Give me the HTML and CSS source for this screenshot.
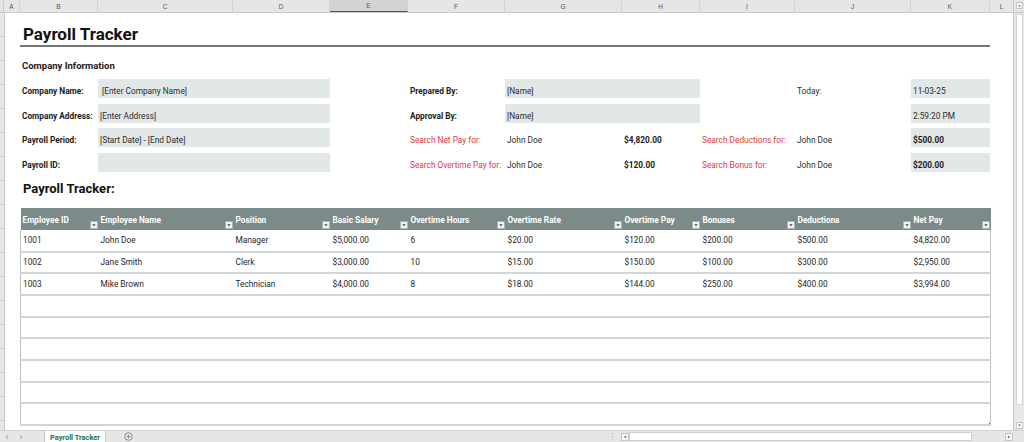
FILE: index.html
```html
<!DOCTYPE html>
<html lang="en">
<head>
<meta charset="utf-8">
<title>Payroll Tracker</title>
<link rel="stylesheet" href="styles.css">
</head>
<body>
<div class="app">
  <div class="colhead">
    <div class="corner"></div>
    <div class="ch c-a">A</div>
    <div class="ch c-b">B</div>
    <div class="ch c-c">C</div>
    <div class="ch c-d">D</div>
    <div class="ch c-e sel">E</div>
    <div class="ch c-f">F</div>
    <div class="ch c-g">G</div>
    <div class="ch c-h">H</div>
    <div class="ch c-i">I</div>
    <div class="ch c-j">J</div>
    <div class="ch c-k">K</div>
    <div class="ch c-l">L</div>
    <div class="vs-top">
      <svg class="arrowbox" viewBox="0 0 7 7" width="7" height="7"><rect x="0.5" y="0.5" width="6" height="6" fill="#fff" stroke="#c6c6c6"/><path d="M2 4.5h3L3.5 2.5z" fill="#777"/></svg>
    </div>
  </div>

  <div class="main">
    <div class="rowhead"></div>
    <div class="sheet">
      <h1 class="title">Payroll Tracker</h1>
      <div class="rule"></div>
      <div class="section-label">Company Information</div>

      <div class="info">
        <div class="cell lbl">Company Name:</div>
        <div class="cell box span2">&nbsp;[Enter Company Name]</div>
        <div class="cell"></div>
        <div class="cell lbl">Prepared By:</div>
        <div class="cell box span2">[Name]</div>
        <div class="cell"></div>
        <div class="cell">Today:</div>
        <div class="cell box">11-03-25</div>

        <div class="cell lbl">Company Address:</div>
        <div class="cell box span2">[Enter Address]</div>
        <div class="cell"></div>
        <div class="cell lbl">Approval By:</div>
        <div class="cell box span2">[Name]</div>
        <div class="cell"></div>
        <div class="cell"></div>
        <div class="cell box">2:59:20 PM</div>

        <div class="cell lbl">Payroll Period:</div>
        <div class="cell box span2">[Start Date] - [End Date]</div>
        <div class="cell"></div>
        <div class="cell red">Search Net Pay for:</div>
        <div class="cell">John Doe</div>
        <div class="cell strong">$4,820.00</div>
        <div class="cell red">Search Deductions for:</div>
        <div class="cell">John Doe</div>
        <div class="cell box strong">$500.00</div>

        <div class="cell lbl">Payroll ID:</div>
        <div class="cell box span2"></div>
        <div class="cell"></div>
        <div class="cell red">Search Overtime Pay for:</div>
        <div class="cell">John Doe</div>
        <div class="cell strong">$120.00</div>
        <div class="cell red">Search Bonus for:</div>
        <div class="cell">John Doe</div>
        <div class="cell box strong">$200.00</div>
      </div>

      <h2 class="subtitle">Payroll Tracker:</h2>

      <table class="tracker">
        <colgroup>
          <col class="w-b"><col class="w-c"><col class="w-d"><col class="w-e"><col class="w-f">
          <col class="w-g"><col class="w-h"><col class="w-i"><col class="w-j"><col class="w-k">
        </colgroup>
        <thead>
          <tr>
            <th><div class="th-in"><span>Employee ID</span><svg class="dd" viewBox="0 0 8 8"><rect x="0.5" y="0.5" width="7" height="7" fill="#f2f2f2" stroke="#a9b3b3"/><path d="M2.3 3.3h3.4L4 5.3z" fill="#444"/></svg></div></th>
            <th><div class="th-in"><span>Employee Name</span><svg class="dd" viewBox="0 0 8 8"><rect x="0.5" y="0.5" width="7" height="7" fill="#f2f2f2" stroke="#a9b3b3"/><path d="M2.3 3.3h3.4L4 5.3z" fill="#444"/></svg></div></th>
            <th><div class="th-in"><span>Position</span><svg class="dd" viewBox="0 0 8 8"><rect x="0.5" y="0.5" width="7" height="7" fill="#f2f2f2" stroke="#a9b3b3"/><path d="M2.3 3.3h3.4L4 5.3z" fill="#444"/></svg></div></th>
            <th><div class="th-in"><span>Basic Salary</span><svg class="dd" viewBox="0 0 8 8"><rect x="0.5" y="0.5" width="7" height="7" fill="#f2f2f2" stroke="#a9b3b3"/><path d="M2.3 3.3h3.4L4 5.3z" fill="#444"/></svg></div></th>
            <th><div class="th-in"><span>Overtime Hours</span><svg class="dd" viewBox="0 0 8 8"><rect x="0.5" y="0.5" width="7" height="7" fill="#f2f2f2" stroke="#a9b3b3"/><path d="M2.3 3.3h3.4L4 5.3z" fill="#444"/></svg></div></th>
            <th><div class="th-in"><span>Overtime Rate</span><svg class="dd" viewBox="0 0 8 8"><rect x="0.5" y="0.5" width="7" height="7" fill="#f2f2f2" stroke="#a9b3b3"/><path d="M2.3 3.3h3.4L4 5.3z" fill="#444"/></svg></div></th>
            <th><div class="th-in"><span>Overtime Pay</span><svg class="dd" viewBox="0 0 8 8"><rect x="0.5" y="0.5" width="7" height="7" fill="#f2f2f2" stroke="#a9b3b3"/><path d="M2.3 3.3h3.4L4 5.3z" fill="#444"/></svg></div></th>
            <th><div class="th-in"><span>Bonuses</span><svg class="dd" viewBox="0 0 8 8"><rect x="0.5" y="0.5" width="7" height="7" fill="#f2f2f2" stroke="#a9b3b3"/><path d="M2.3 3.3h3.4L4 5.3z" fill="#444"/></svg></div></th>
            <th><div class="th-in"><span>Deductions</span><svg class="dd" viewBox="0 0 8 8"><rect x="0.5" y="0.5" width="7" height="7" fill="#f2f2f2" stroke="#a9b3b3"/><path d="M2.3 3.3h3.4L4 5.3z" fill="#444"/></svg></div></th>
            <th><div class="th-in"><span>Net Pay</span><svg class="dd" viewBox="0 0 8 8"><rect x="0.5" y="0.5" width="7" height="7" fill="#f2f2f2" stroke="#a9b3b3"/><path d="M2.3 3.3h3.4L4 5.3z" fill="#444"/></svg></div></th>
          </tr>
        </thead>
        <tbody>
          <tr><td>1001</td><td>John Doe</td><td>Manager</td><td>$5,000.00</td><td>6</td><td>$20.00</td><td>$120.00</td><td>$200.00</td><td>$500.00</td><td>$4,820.00</td></tr>
          <tr><td>1002</td><td>Jane Smith</td><td>Clerk</td><td>$3,000.00</td><td>10</td><td>$15.00</td><td>$150.00</td><td>$100.00</td><td>$300.00</td><td>$2,950.00</td></tr>
          <tr><td>1003</td><td>Mike Brown</td><td>Technician</td><td>$4,000.00</td><td>8</td><td>$18.00</td><td>$144.00</td><td>$250.00</td><td>$400.00</td><td>$3,994.00</td></tr>
          <tr><td></td><td></td><td></td><td></td><td></td><td></td><td></td><td></td><td></td><td></td></tr>
          <tr><td></td><td></td><td></td><td></td><td></td><td></td><td></td><td></td><td></td><td></td></tr>
          <tr><td></td><td></td><td></td><td></td><td></td><td></td><td></td><td></td><td></td><td></td></tr>
          <tr><td></td><td></td><td></td><td></td><td></td><td></td><td></td><td></td><td></td><td></td></tr>
          <tr><td></td><td></td><td></td><td></td><td></td><td></td><td></td><td></td><td></td><td></td></tr>
          <tr class="last"><td></td><td></td><td></td><td></td><td></td><td></td><td></td><td></td><td></td><td class="resize"></td></tr>
        </tbody>
      </table>
    </div>
    <div class="vscroll">
      <div class="thumb"></div>
      <svg class="arrowbox" viewBox="0 0 7 7" width="7" height="7"><rect x="0.5" y="0.5" width="6" height="6" fill="#fff" stroke="#c6c6c6"/><path d="M2 2.5h3L3.5 4.5z" fill="#777"/></svg>
    </div>
  </div>

  <div class="tabbar">
    <div class="nav">
      <svg width="5" height="6" viewBox="0 0 5 6"><path d="M4 0.5v5L1 3z" fill="#c2c2c2"/></svg>
      <svg width="5" height="6" viewBox="0 0 5 6"><path d="M1 0.5v5L4 3z" fill="#c2c2c2"/></svg>
    </div>
    <div class="tab">Payroll Tracker</div>
    <div class="add">
      <svg width="9" height="9" viewBox="0 0 9 9"><circle cx="4.5" cy="4.5" r="3.8" fill="none" stroke="#777" stroke-width="0.8"/><path d="M4.5 2.6v3.8M2.6 4.5h3.8" stroke="#777" stroke-width="0.8"/></svg>
    </div>
    <div class="spacer"></div>
    <div class="hs">
      <div class="split"></div>
      <svg class="arrowbox" viewBox="0 0 7 7" width="8" height="8"><rect x="0.5" y="0.5" width="6" height="6" fill="#fff" stroke="#c6c6c6"/><path d="M4.5 2v3L2.5 3.5z" fill="#777"/></svg>
      <div class="track"></div>
      <div class="hs-gap"></div>
      <svg class="arrowbox" viewBox="0 0 7 7" width="8" height="8"><rect x="0.5" y="0.5" width="6" height="6" fill="#fff" stroke="#c6c6c6"/><path d="M2.5 2v3L4.5 3.5z" fill="#777"/></svg>
    </div>
  </div>
</div>
</body>
</html>
```

FILE: styles.css
```css
* { box-sizing: border-box; }

html, body {
  margin: 0;
  padding: 0;
}

body {
  width: 1024px;
  height: 442px;
  overflow: hidden;
  background: #ffffff;
  font-family: Roboto, "Liberation Sans", sans-serif;
  font-size: 8.3px;
  color: #262626;
}

.app {
  display: grid;
  grid-template-rows: 13px 417px 12px;
  height: 442px;
}

/* column header bar */
.colhead {
  display: flex;
  background: #e6e6e6;
  border-bottom: 1px solid #c9c9c9;
}
.corner { flex: none; width: 4px; border-right: 1px solid #cfcfcf; }
.ch {
  flex: none;
  display: flex;
  align-items: center;
  justify-content: center;
  font-family: "Liberation Sans", Arial, sans-serif;
  font-size: 6.5px;
  color: #555;
  border-right: 1px solid #d3d3d3;
}
.ch.sel {
  background: #d3d3d3;
  border-bottom: 1px solid #217346;
  color: #4a6b55;
}
.c-a { width: 16px; }
.c-b { width: 78px; }
.c-c { width: 135px; }
.c-d { width: 97px; }
.c-e { width: 78px; }
.c-f { width: 97px; }
.c-g { width: 117px; }
.c-h { width: 78px; }
.c-i { width: 95px; }
.c-j { width: 116px; }
.c-k { width: 79px; }
.c-l { width: 24px; border-right: 1px solid #c6c6c6; }
.vs-top {
  flex: 1;
  display: flex;
  align-items: center;
  justify-content: center;
  padding-bottom: 1px;
}
.arrowbox { display: block; flex: none; }

/* main area */
.main {
  display: flex;
  min-height: 0;
}
.rowhead {
  flex: none;
  width: 5px;
  background: repeating-linear-gradient(to bottom, #e6e6e6 0 23px, #cdcdcd 23px 24px);
  border-right: 1px solid #c9c9c9;
}
.sheet {
  flex: none;
  width: 1009px;
  border-right: 1px solid #c6c6c6;
  background: #ffffff;
  overflow: hidden;
}
.vscroll {
  flex: 1;
  display: flex;
  flex-direction: column;
  align-items: center;
  justify-content: space-between;
  background: #e8e8e8;
  padding: 1px 0 1px;
}
.vscroll .thumb {
  width: 7px;
  height: 391px;
  background: #ffffff;
  border: 1px solid #d6d6d6;
}

/* sheet content */
.title {
  margin: 11px 0 0 18px;
  font-size: 17px;
  line-height: 20px;
  height: 20px;
  font-weight: 700;
  color: #111;
}
.rule {
  margin: 1px 0 0 15px;
  width: 970px;
  height: 2px;
  background: #767676;
}
.section-label {
  margin: 13px 0 0 17px;
  font-size: 9.5px;
  line-height: 12px;
  font-weight: 700;
  color: #1a1a1a;
}

.info {
  display: grid;
  grid-template-columns: 78px 135px 97px 78px 97px 117px 78px 95px 116px 79px;
  grid-auto-rows: 19px;
  row-gap: 5.67px;
  margin: 7px 0 0 15px;
}
.cell {
  display: flex;
  align-items: flex-end;
  padding: 0 2px 2px;
  line-height: 10px;
  white-space: nowrap;
  color: #2b2b2b;
}
.cell.span2 { grid-column: span 2; }
.cell.box { background: #e2e7e7; }
.cell.lbl { font-weight: 700; color: #1a1a1a; }
.cell.strong { font-weight: 700; color: #1a1a1a; }
.cell.red { color: #dc3a3c; }

.subtitle {
  margin: 9px 0 0 18px;
  font-size: 13px;
  line-height: 16px;
  font-weight: 700;
  color: #111;
}

/* table */
.tracker {
  margin: 11px 0 0 15px;
  width: 970px;
  table-layout: fixed;
  border-collapse: collapse;
}
.w-b { width: 78px; }
.w-c { width: 135px; }
.w-d { width: 97px; }
.w-e { width: 78px; }
.w-f { width: 97px; }
.w-g { width: 117px; }
.w-h { width: 78px; }
.w-i { width: 95px; }
.w-j { width: 116px; }
.w-k { width: 79px; }

.tracker th {
  padding: 0;
  height: 22px;
  background: #7b8b8a;
  color: #ffffff;
  font-weight: 700;
  text-align: left;
}
.th-in {
  display: flex;
  justify-content: space-between;
  height: 22px;
}
.th-in span {
  align-self: center;
  padding: 3px 2px 0;
  white-space: nowrap;
  line-height: 10px;
}
.dd {
  flex: none;
  align-self: flex-end;
  width: 8px;
  height: 8px;
  margin: 0 1px 1px 0;
}
.tracker tbody tr { height: 21.67px; }
.tracker td {
  padding: 0 2px;
  vertical-align: middle;
  border-bottom: 2px solid #cdd5d5;
  white-space: nowrap;
  color: #262626;
}
.tracker tbody td:first-child { border-left: 1px solid #b8c3c3; }
.tracker tbody td:last-child { border-right: 1px solid #b8c3c3; }
.tracker td.resize {
  background: linear-gradient(135deg, transparent 0 85%, #3c63b5 85% 100%) no-repeat right bottom / 4px 4px;
}

/* sheet tab bar */
.tabbar {
  display: flex;
  align-items: stretch;
  background: #e6e6e6;
  border-top: 1px solid #d0d0d0;
}
.nav {
  flex: none;
  width: 44px;
  display: flex;
  align-items: center;
  gap: 10px;
  padding-left: 4px;
}
.tab {
  flex: none;
  width: 62px;
  background: #ffffff;
  border-left: 1px solid #c6c6c6;
  border-right: 1px solid #c6c6c6;
  color: #217346;
  font-weight: 700;
  font-size: 7.4px;
  display: flex;
  align-items: center;
  justify-content: center;
  padding-top: 1px;
}
.add {
  flex: none;
  display: flex;
  align-items: center;
  padding-left: 18px;
}
.spacer { flex: 1; }
.hs {
  flex: none;
  width: 416px;
  display: flex;
  align-items: center;
}
.split {
  flex: none;
  width: 13px;
  height: 9px;
  background: radial-gradient(circle, #b5b5b5 0.7px, transparent 0.9px) 3px 0 / 3px 3px repeat-y;
}
.track {
  flex: none;
  width: 343px;
  height: 9px;
  background: #ffffff;
  border: 1px solid #cfcfcf;
}
.hs-gap { flex: none; width: 33px; }
```
